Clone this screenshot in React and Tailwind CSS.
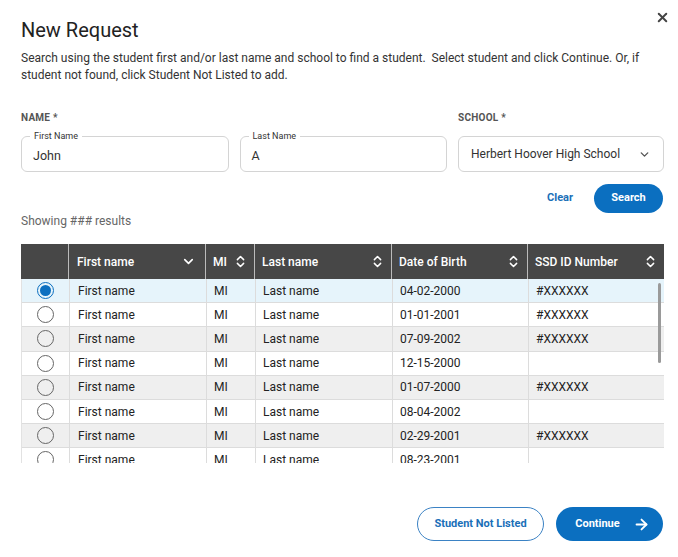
import React from "react";
import { X, ChevronDown, ChevronsUpDown, ArrowRight } from "lucide-react";

const rows = [
  { dob: "04-02-2000", ssd: "#XXXXXX" },
  { dob: "01-01-2001", ssd: "#XXXXXX" },
  { dob: "07-09-2002", ssd: "#XXXXXX" },
  { dob: "12-15-2000", ssd: "" },
  { dob: "01-07-2000", ssd: "#XXXXXX" },
  { dob: "08-04-2002", ssd: "" },
  { dob: "02-29-2001", ssd: "#XXXXXX" },
  { dob: "08-23-2001", ssd: "" },
];

function Field({ label, value }) {
  return (
    <div className="relative flex-1 h-[36px] rounded-[6px] border border-[#d4d4d4] flex items-center px-[11px] text-[12.5px] text-[#333]">
      <span className="absolute left-[8px] top-[-6px] bg-white px-[4px] text-[9px] leading-[11px] text-[#333]">{label}</span>
      <span className="mt-[4px]">{value}</span>
    </div>
  );
}

function Radio({ checked }) {
  return checked ? (
    <span className="w-[17px] h-[17px] rounded-full border-[1.5px] border-[#0b6fc0] flex items-center justify-center">
      <span className="w-[11px] h-[11px] rounded-full bg-[#0b6fc0]" />
    </span>
  ) : (
    <span className="w-[17px] h-[17px] rounded-full border border-[#666]" />
  );
}

export default function App() {
  return (
    <div className="relative w-[678px] h-[557px] bg-white pl-[21px] pr-[14px] pt-[18px] text-[#333]" style={{ fontFamily: "Roboto, 'Liberation Sans', sans-serif" }}>
      <button className="absolute right-[8px] top-[10px] text-[#444]">
        <X size={15} strokeWidth={3.2} />
      </button>
      <h1 className="text-[20px] leading-[24px] text-[#222]">New Request</h1>
      <p className="mt-[8px] text-[12px] leading-[17px] text-[#333]">
        Search using the student first and/or last name and school to find a student.&nbsp; Select student and click Continue. Or, if student not found, click Student Not Listed to add.
      </p>

      <div className="mt-[27px] flex gap-[11px]">
        <div className="flex-[2] flex flex-col">
          <div className="text-[10px] leading-[14px] font-bold text-[#555] tracking-wide">NAME *</div>
          <div className="mt-[11px] flex gap-[11px]">
            <Field label="First Name" value="John" />
            <Field label="Last Name" value="A" />
          </div>
        </div>
        <div className="w-[206px] flex flex-col">
          <div className="text-[10px] leading-[14px] font-bold text-[#555] tracking-wide">SCHOOL *</div>
          <div className="mt-[11px] h-[36px] rounded-[6px] border border-[#d4d4d4] flex items-center justify-between pl-[12px] pr-[12px] text-[12px] text-[#333]">
            <span>Herbert Hoover High School</span>
            <ChevronDown size={13} strokeWidth={2.5} className="text-[#555]" />
          </div>
        </div>
      </div>

      <div className="mt-[12px] flex items-center justify-end gap-[21px] pr-[1px]">
        <button className="text-[11px] font-bold text-[#1a6fb8]">Clear</button>
        <button className="w-[69px] h-[29px] rounded-full bg-[#0b6fc0] text-white text-[11px] font-bold">Search</button>
      </div>

      <div className="text-[12px] leading-[16px] text-[#666]">Showing ### results</div>

      <div className="mt-[15px] w-[643px]">
        <div className="flex h-[35px] bg-[#474747] text-white text-[12px] font-medium">
          <div className="w-[48px] border-r border-[#bbb]" />
          <div className="w-[137px] flex items-center justify-between pl-[8px] pr-[9px] border-r border-[#bbb]">
            <span>First name</span>
            <ChevronDown size={15} strokeWidth={2.6} />
          </div>
          <div className="w-[49px] flex items-center justify-between pl-[7px] pr-[6px] border-r border-[#bbb]">
            <span>MI</span>
            <ChevronsUpDown size={15} strokeWidth={2.4} />
          </div>
          <div className="w-[137px] flex items-center justify-between pl-[7px] pr-[6px] border-r border-[#bbb]">
            <span>Last name</span>
            <ChevronsUpDown size={15} strokeWidth={2.4} />
          </div>
          <div className="w-[136px] flex items-center justify-between pl-[7px] pr-[6px] border-r border-[#bbb]">
            <span>Date of Birth</span>
            <ChevronsUpDown size={15} strokeWidth={2.4} />
          </div>
          <div className="flex-1 flex items-center justify-between pl-[7px] pr-[6px]">
            <span>SSD ID Number</span>
            <ChevronsUpDown size={15} strokeWidth={2.4} />
          </div>
        </div>
        <div className="relative h-[184px] overflow-hidden border-l border-[#e2e2e2]">
          {rows.map((r, i) => {
            const bg = i === 0 ? "bg-[#e6f4fb]" : i % 2 === 0 ? "bg-[#efefef]" : "bg-white";
            return (
              <div key={i} className={`flex h-[24.2px] shrink-0 border-b border-[#dcdcdc] text-[12px] text-[#222] ${bg}`}>
                <div className="w-[48px] flex items-center justify-center border-r border-[#dcdcdc]">
                  <Radio checked={i === 0} />
                </div>
                <div className="w-[137px] flex items-center pl-[8px] border-r border-[#dcdcdc]">First name</div>
                <div className="w-[49px] flex items-center pl-[7px] border-r border-[#dcdcdc]">MI</div>
                <div className="w-[137px] flex items-center pl-[7px] border-r border-[#dcdcdc]">Last name</div>
                <div className="w-[136px] flex items-center pl-[7px] border-r border-[#dcdcdc]">{r.dob}</div>
                <div className="flex-1 flex items-center pl-[7px]">{r.ssd}</div>
              </div>
            );
          })}
          <div className="absolute right-[3px] top-[4px] w-[3px] h-[80px] rounded-full bg-[#9a9a9a]" />
        </div>
      </div>

      <div className="mt-[44px] flex justify-end gap-[12px] pr-[1px]">
        <button className="w-[127px] h-[34px] rounded-full border border-[#3b82c4] text-[11px] font-bold text-[#1a6fb8]">Student Not Listed</button>
        <button className="w-[107px] h-[34px] rounded-full bg-[#0b6fc0] text-white text-[11px] font-bold flex items-center justify-center gap-[13px] pl-[6px]">
          <span>Continue</span>
          <ArrowRight size={17} strokeWidth={2.6} />
        </button>
      </div>
    </div>
  );
}
